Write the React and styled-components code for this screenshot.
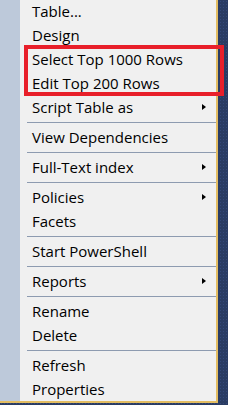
import React from "react";
import styled, { createGlobalStyle } from "styled-components";

const Global = createGlobalStyle`
  html, body {
    margin: 0;
    padding: 0;
    background: #2a3c63;
    overflow: hidden;
  }
`;

const Screen = styled.div`
  position: relative;
  width: 228px;
  height: 405px;
  background-color: #2a3c63;
  background-image: radial-gradient(#35497a 1px, transparent 1px);
  background-size: 3px 3px;
  overflow: hidden;
`;

const Menu = styled.div`
  display: flex;
  width: 216px;
  margin-top: -1px;
  border-right: 2px solid #e3bd62;
  border-bottom: 2px solid #e3bd62;
  background: #f0f0f0;
`;

const Gutter = styled.div`
  width: 20px;
  flex-shrink: 0;
  background: #bdc9da;
`;

const List = styled.div`
  flex: 1;
  display: flex;
  flex-direction: column;
`;

const Item = styled.div`
  display: flex;
  align-items: center;
  justify-content: space-between;
  height: 24px;
  padding: 0 10px 0 12px;
  font-family: "Open Sans", "Noto Sans", sans-serif;
  font-size: 15px;
  color: #000;
  white-space: nowrap;
`;

const Arrow = styled.span`
  width: 0;
  height: 0;
  border-top: 3.5px solid transparent;
  border-bottom: 3.5px solid transparent;
  border-left: 4px solid #000;
`;

const Separator = styled.div`
  height: 1px;
  margin: 3px 0 2px 7px;
  background: #8d9bb0;
`;

const Highlight = styled.div`
  position: absolute;
  left: 24px;
  top: 45px;
  width: 200px;
  height: 51px;
  box-sizing: border-box;
  border: 4px solid #e81f2a;
`;

const groups = [
  [
    { label: "Table..." },
    { label: "Design" },
    { label: "Select Top 1000 Rows" },
    { label: "Edit Top 200 Rows" },
    { label: "Script Table as", sub: true },
  ],
  [{ label: "View Dependencies" }],
  [{ label: "Full-Text index", sub: true }],
  [{ label: "Policies", sub: true }, { label: "Facets" }],
  [{ label: "Start PowerShell" }],
  [{ label: "Reports", sub: true }],
  [{ label: "Rename" }, { label: "Delete" }],
  [{ label: "Refresh" }, { label: "Properties" }],
];

const App = () => {
  return (
    <Screen>
      <Global />
      <Menu>
        <Gutter />
        <List>
          {groups.map((group, gi) => (
            <React.Fragment key={gi}>
              {gi > 0 && <Separator />}
              {group.map((it) => (
                <Item key={it.label}>
                  <span>{it.label}</span>
                  {it.sub && <Arrow />}
                </Item>
              ))}
            </React.Fragment>
          ))}
        </List>
      </Menu>
      <Highlight />
    </Screen>
  );
};

export default App;
